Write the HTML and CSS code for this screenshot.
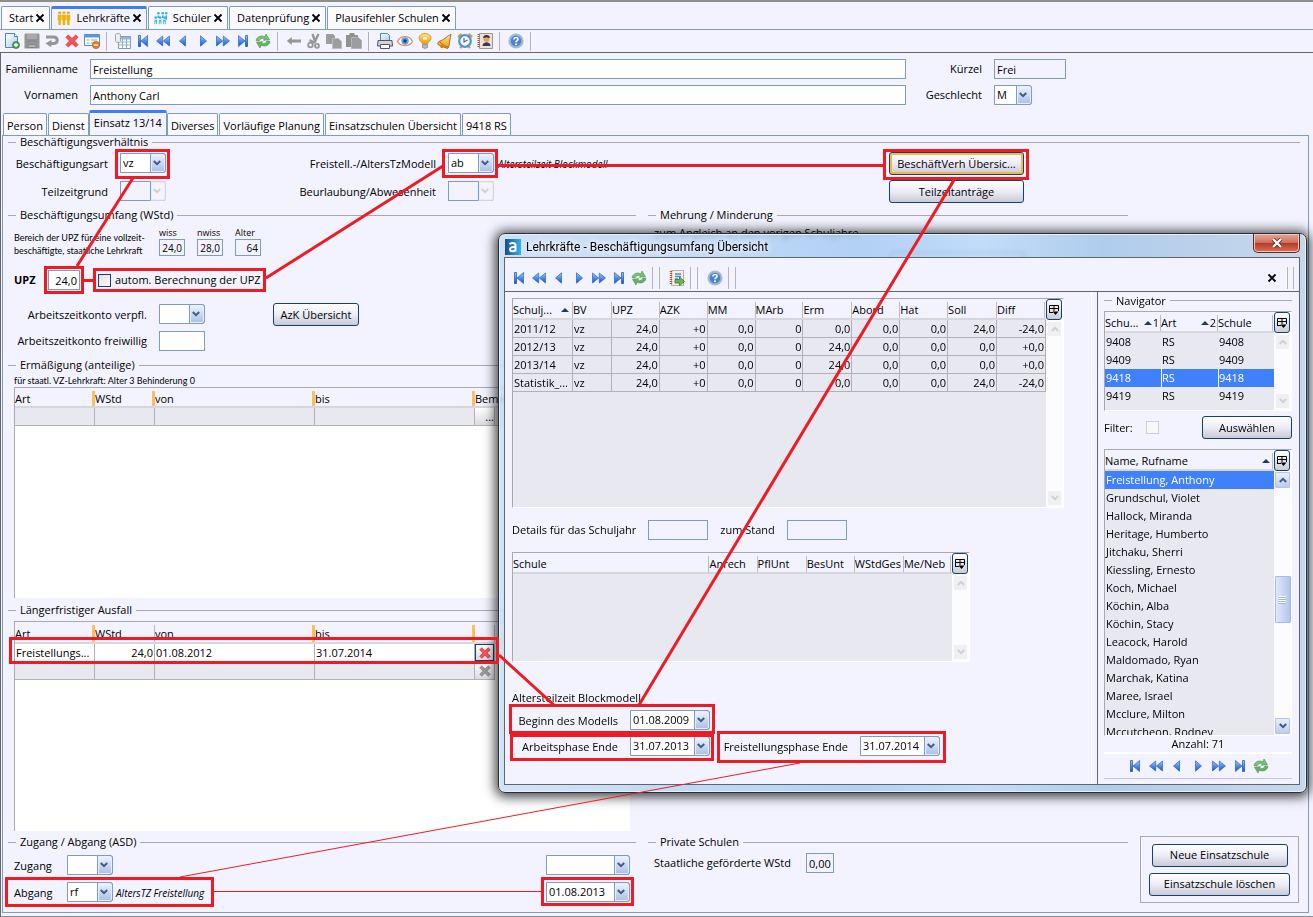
FILE: index.html
```
<!DOCTYPE html>
<html lang="de">
<head>
<meta charset="utf-8">
<title>Lehrkräfte</title>
<link rel="stylesheet" href="styles.css">
</head>
<body>
<svg class="defs" aria-hidden="true">
  <defs>
    <linearGradient id="gb" x1="0" y1="0" x2="0" y2="1"><stop offset="0" stop-color="#a9cbf7"/><stop offset=".5" stop-color="#4f8fe6"/><stop offset="1" stop-color="#1552bd"/></linearGradient>
    <linearGradient id="gg" x1="0" y1="0" x2="0" y2="1"><stop offset="0" stop-color="#fde58a"/><stop offset="1" stop-color="#e19a1c"/></linearGradient>
    <linearGradient id="gs" x1="0" y1="0" x2="1" y2="1"><stop offset="0" stop-color="#ffffff"/><stop offset="1" stop-color="#a8cdee"/></linearGradient>
    <linearGradient id="ga" x1="0" y1="0" x2="1" y2="0"><stop offset="0" stop-color="#174f86"/><stop offset="1" stop-color="#2fb4ea"/></linearGradient>
    <symbol id="first" viewBox="0 0 16 16"><path d="M3.5 2.5h2v11h-2z" fill="url(#gb)" stroke="#1a4fae" stroke-width=".7"/><path d="M12.500 2.500V13.500L6 8z" fill="url(#gb)" stroke="#2a62c4" stroke-width=".7"/></symbol>
    <symbol id="last" viewBox="0 0 16 16"><path d="M10.500 2.500h2v11h-2z" fill="url(#gb)" stroke="#1a4fae" stroke-width=".7"/><path d="M3.500 2.500V13.500L10 8z" fill="url(#gb)" stroke="#2a62c4" stroke-width=".7"/></symbol>
    <symbol id="rew" viewBox="0 0 16 16"><path d="M7.700 3v10L1.500 8zM14.500 3v10L8.300 8z" fill="url(#gb)" stroke="#2a62c4" stroke-width=".7"/></symbol>
    <symbol id="ffw" viewBox="0 0 16 16"><path d="M1.500 3v10L7.700 8zM8.300 3v10L14.500 8z" fill="url(#gb)" stroke="#2a62c4" stroke-width=".7"/></symbol>
    <symbol id="prev" viewBox="0 0 16 16"><path d="M10.500 2.800v10.400L4.500 8z" fill="url(#gb)" stroke="#2a62c4" stroke-width=".7"/></symbol>
    <symbol id="next" viewBox="0 0 16 16"><path d="M5.500 2.800v10.400L11.500 8z" fill="url(#gb)" stroke="#2a62c4" stroke-width=".7"/></symbol>
    <symbol id="refresh" viewBox="0 0 16 16"><path d="M1 7.500C2 3.500 6 2 10 3.800L11 1l3.500 5.800-6 .5 1-1.800C7 4.800 4.500 5.800 4 8z" fill="#7cc276" stroke="#3f8f45" stroke-width=".6"/><path d="M15 8.500c-1 4-5 5.500-9 3.700L5 15 1.500 9.200l6-.5-1 1.800c2.500.7 5-.3 5.500-2.500z" fill="#68b262" stroke="#3f8f45" stroke-width=".6"/></symbol>
    <symbol id="new" viewBox="0 0 16 16"><path d="M1.500.5h9l3 3v11h-12z" fill="url(#gs)" stroke="#4d86bb"/><path d="M10.500.5v3h3" fill="#fff" stroke="#4d86bb"/><circle cx="12" cy="12" r="3.500" fill="#4fa548" stroke="#2f7a33" stroke-width=".7"/><path d="M12 10v4M10 12h4" stroke="#fff" stroke-width="1.300"/></symbol>
    <symbol id="save" viewBox="0 0 16 16"><path d="M1.500.5h13l1 1v14H.500v-14z" fill="#959595"/><path d="M3 1h10v5H3z" fill="#a9a9a9"/><path d="M3 8h10M4 11.500h8v3H4z" stroke="#858585" fill="#b5b5b5"/></symbol>
    <symbol id="undo" viewBox="0 0 16 16"><path d="M2 4h7.500c5 0 5 6.500 0 6.500H6.500" fill="none" stroke="#969696" stroke-width="3"/><path d="M7.500 6.800v7.400L1.500 10.500z" fill="#969696"/></symbol>
    <symbol id="del" viewBox="0 0 16 16"><path d="M2 4.300 4.300 2 8 5.500 11.700 2 14 4.300 10.500 8 14 11.700 11.700 14 8 10.500 4.300 14 2 11.700 5.500 8z" fill="#f4555c" stroke="#d52d33" stroke-width=".8"/></symbol>
    <symbol id="delgray" viewBox="0 0 16 16"><path d="M2 4.300 4.300 2 8 5.500 11.700 2 14 4.300 10.500 8 14 11.700 11.700 14 8 10.500 4.300 14 2 11.700 5.500 8z" fill="#999" stroke="#888" stroke-width=".8"/></symbol>
    <symbol id="formdel" viewBox="0 0 16 16"><path d="M.500 1.500h15v11H.500z" fill="#fff" stroke="#5d8fc7"/><path d="M1 2h14v2.500H1z" fill="#5b97dc"/><path d="M2.500 7h3M2.500 10h3M7 7h6M7 10h4" stroke="#8aa6c4"/><circle cx="12" cy="12" r="3.600" fill="#ef7a22" stroke="#c4510f" stroke-width=".7"/><path d="M9.800 12h4.400" stroke="#fff" stroke-width="1.500"/></symbol>
    <symbol id="sheet" viewBox="0 0 16 16"><path d="M3.500 3.500h12v12h-12z" fill="#fff" stroke="#8d9aa8"/><path d="M4 4h11v2.500H4z" fill="#8fb8dd"/><path d="M4 9h11M4 12h11M7.500 6v9M11.500 6v9" stroke="#8eb3c9"/><path d="M.500 1.500c0-1.300 5-1.300 5 0v7c0 1.300-5 1.300-5 0z" fill="#eee" stroke="#a8a8a8"/></symbol>
    <symbol id="back" viewBox="0 0 16 16"><path d="M.800 8 5.800 4v2.500H15v3H5.800V12z" fill="#969696"/></symbol>
    <symbol id="cut" viewBox="0 0 16 16"><path d="M12.500 1 8.500 9.500M6.500 1l3 8.500" stroke="#969696" stroke-width="2.400" fill="none"/><path d="M3.500 7 9 10" stroke="#969696" stroke-width="2"/><circle cx="4.500" cy="12" r="2.300" fill="none" stroke="#969696" stroke-width="1.800"/><circle cx="11" cy="12.800" r="2" fill="none" stroke="#969696" stroke-width="1.800"/></symbol>
    <symbol id="copy" viewBox="0 0 16 16"><path d="M0 1h7l2 2v8H0z" fill="#9d9d9d"/><path d="M6.500 5.500h6l3 3v7h-9z" fill="#9d9d9d" stroke="#bdbdbd"/></symbol>
    <symbol id="paste" viewBox="0 0 16 16"><path d="M0 2h3l1-2h4l1 2h3v12H0z" fill="#919191"/><path d="M5.500 4.500h7l3 3v8h-10z" fill="#9d9d9d" stroke="#b3b3b3"/></symbol>
    <symbol id="print" viewBox="0 0 16 16"><path d="M3.500 7.500V.500h7l2 2v5" fill="url(#gs)" stroke="#4b87c0"/><path d="M1 7.500h14l.5 5.500H.500z" fill="#d5d5d5" stroke="#555"/><path d="M3.500 11.500h9v4h-9z" fill="#fff" stroke="#555"/></symbol>
    <symbol id="eye" viewBox="0 0 16 16"><path d="M.500 8.500C3.500 2 12.500 2 15.500 8.500 12 14 4 14 .500 8.500z" fill="#fff" stroke="#d9936a" stroke-width="1.300"/><circle cx="8" cy="8" r="3.700" fill="#5fa2dc"/><circle cx="8" cy="8" r="1.700" fill="#183d72"/></symbol>
    <symbol id="bulb" viewBox="0 0 16 16"><path d="M5.500 11C5 9 2 8 2 5c0-6 12-6 12 0 0 3-3 4-3.500 6z" fill="url(#gg)" stroke="#e0a02a"/><path d="M6 5.500h4" stroke="#fff8c8" stroke-width="2"/><path d="M5.500 11.500h5v3l-2.500 1-2.500-1z" fill="#b8b8b8" stroke="#777" stroke-width=".6"/></symbol>
    <symbol id="bell" viewBox="0 0 16 16"><path d="M14 1.500C10 2.500 9 6 2 8.500c-1.500 1-1.500 2.500-.5 3.500l9 3.500c2-.5 1.500-6 3.500-14z" fill="url(#gg)" stroke="#b2690a"/><path d="M3 9c1 1.500 5 4.500 8 5" fill="none" stroke="#b2690a"/><circle cx="5" cy="13.500" r="1.800" fill="#d38510"/></symbol>
    <symbol id="clock" viewBox="0 0 16 16"><path d="m3 15 2-2M13 15l-2-2M1 4l3.500-3M15 4l-3.500-3" stroke="#dfa12c" stroke-width="2.400"/><circle cx="8" cy="8" r="5.800" fill="#fff" stroke="#4a94dc" stroke-width="2.200"/><path d="M7 5v4l3.500-2" fill="none" stroke="#3c679b" stroke-width="1.200"/></symbol>
    <symbol id="book" viewBox="0 0 16 16"><path d="M2.500.5h13v15h-13z" fill="#e9e3dc" stroke="#a39689"/><path d="M1.500 1v14" stroke="#b5523a" stroke-width="2" stroke-dasharray="1 1"/><circle cx="9.500" cy="6" r="3" fill="#e1a56d"/><path d="M6 5c0-4 7-4 7 0l-3.500-.8z" fill="#352a26"/><path d="M5.500 13c0-5 8-5 8 0z" fill="#3c3c44"/></symbol>
    <symbol id="help" viewBox="0 0 16 16"><circle cx="8" cy="8" r="7" fill="#91b8e8" stroke="#b0b9c6" stroke-width="1.200"/><circle cx="8" cy="8" r="5.300" fill="#4c83cb"/><path d="M6 6.500c0-3 4.500-2.500 4 0-.2 1-2 1.300-2 2.700" fill="none" stroke="#fff" stroke-width="1.600"/><circle cx="8" cy="11.200" r="1" fill="#fff"/></symbol>
    <symbol id="export" viewBox="0 0 16 16"><path d="M2.500.5h12v15h-12z" fill="#f4eee6" stroke="#bcae9c"/><path d="M2 1v14" stroke="#b5523a" stroke-width="2.500" stroke-dasharray="1 1"/><path d="M6 4h6M6 6.500h6M6 9h3" stroke="#4b8ad4" stroke-width="1.300"/><path d="M6 9.500h4.500V7l5 4.500-5 4v-2.500H6z" fill="#6fb356" stroke="#2e7b2c" stroke-width=".8"/></symbol>
    <symbol id="close" viewBox="0 0 10 10"><path d="m1.500 1.500 7 7m0-7-7 7" stroke="#000" stroke-width="1.800"/></symbol>
    <symbol id="down" viewBox="0 0 8 6"><path d="m.8 1 3.200 3.200L7.200 1" fill="none" stroke="currentColor" stroke-width="2"/></symbol>
    <symbol id="up" viewBox="0 0 8 6"><path d="M.800 5 4 1.800 7.200 5" fill="none" stroke="currentColor" stroke-width="2"/></symbol>
    <symbol id="sort" viewBox="0 0 8 4"><path d="M0 4 4 0l4 4z" fill="#1f3a5c"/></symbol>
    <symbol id="cols" viewBox="0 0 12 12"><path d="M1.500 9V1.500h9V7M1 4.500h10M6 1.500V7M1 8.500h4" fill="none" stroke="#000"/><path d="M4.500 7.500h6L7.500 11z" fill="#000"/></symbol>
    <symbol id="people" viewBox="0 0 16 16"><circle cx="3" cy="2.200" r="1.800"/><circle cx="8" cy="2.200" r="1.800"/><circle cx="13" cy="2.200" r="1.800"/><path d="M.800 4.500h4.400v6H4.400V16H1.600v-5.500H.800zM5.800 4.500h4.400v6h-.8V16H6.600v-5.500h-.8zM10.800 4.500h4.400v6h-.8V16h-2.800v-5.500h-.8z"/></symbol>
    <symbol id="pupils" viewBox="0 0 16 16"><circle cx="5" cy="2.500" r="1.500"/><circle cx="10" cy="2.500" r="1.500"/><circle cx="14" cy="2.500" r="1.500"/><path d="M4 5h2v3H4zM9 5h2v3H9zM13 5h2v5h-2z"/><circle cx="2" cy="7.500" r="1.500"/><circle cx="7" cy="7.500" r="1.500"/><circle cx="12" cy="7.500" r="1.500"/><path d="M.500 10h3v5h-1v-3h-1v3h-1zM5.500 10h3v5h-1v-3h-1v3h-1zM10.500 10h3v5h-1v-3h-1v3h-1z"/></symbol>
  </defs>
</svg>

<nav class="tabs">
  <button class="tab">Start<svg class="x"><use href="#close"/></svg></button>
  <button class="tab on"><svg class="i gold"><use href="#people"/></svg>Lehrkräfte<svg class="x"><use href="#close"/></svg></button>
  <button class="tab"><svg class="i cyan"><use href="#pupils"/></svg>Schüler<svg class="x"><use href="#close"/></svg></button>
  <button class="tab">Datenprüfung<svg class="x"><use href="#close"/></svg></button>
  <button class="tab">Plausifehler Schulen<svg class="x"><use href="#close"/></svg></button>
</nav>

<div class="toolbar main-tools">
  <button aria-label="Neu"><svg><use href="#new"/></svg></button>
  <button aria-label="Speichern"><svg><use href="#save"/></svg></button>
  <button aria-label="Rückgängig"><svg><use href="#undo"/></svg></button>
  <button aria-label="Löschen"><svg><use href="#del"/></svg></button>
  <button aria-label="Formular"><svg><use href="#formdel"/></svg></button>
  <i class="sep"></i>
  <button aria-label="Liste"><svg><use href="#sheet"/></svg></button>
  <button aria-label="Erster"><svg><use href="#first"/></svg></button>
  <button aria-label="Zurückspulen"><svg><use href="#rew"/></svg></button>
  <button aria-label="Voriger"><svg><use href="#prev"/></svg></button>
  <button aria-label="Nächster"><svg><use href="#next"/></svg></button>
  <button aria-label="Vorspulen"><svg><use href="#ffw"/></svg></button>
  <button aria-label="Letzter"><svg><use href="#last"/></svg></button>
  <button aria-label="Aktualisieren"><svg><use href="#refresh"/></svg></button>
  <i class="sep"></i>
  <button aria-label="Zurück"><svg><use href="#back"/></svg></button>
  <button aria-label="Ausschneiden"><svg><use href="#cut"/></svg></button>
  <button aria-label="Kopieren"><svg><use href="#copy"/></svg></button>
  <button aria-label="Einfügen"><svg><use href="#paste"/></svg></button>
  <i class="sep"></i>
  <button aria-label="Drucken"><svg><use href="#print"/></svg></button>
  <button aria-label="Ansicht"><svg><use href="#eye"/></svg></button>
  <button aria-label="Hinweis"><svg><use href="#bulb"/></svg></button>
  <button aria-label="Glocke"><svg><use href="#bell"/></svg></button>
  <button aria-label="Wecker"><svg><use href="#clock"/></svg></button>
  <button aria-label="Adressbuch"><svg><use href="#book"/></svg></button>
  <i class="sep"></i>
  <button aria-label="Hilfe"><svg><use href="#help"/></svg></button>
  <i class="sep"></i>
</div>

<main class="page">
  <div class="head">
    <label for="fn">Familienname</label><input id="fn" value="Freistellung">
    <label for="kz">Kürzel</label><input id="kz" class="ro" value="Frei" readonly>
    <label for="vn">Vornamen</label><input id="vn" value="Anthony Carl">
    <label for="ge">Geschlecht</label><span class="combo w38"><select id="ge"><option>M</option></select><i><svg><use href="#down"/></svg></i></span>
  </div>

  <nav class="subtabs">
    <button class="tab">Person</button><button class="tab">Dienst</button><button class="tab on">Einsatz 13/14</button><button class="tab">Diverses</button><button class="tab">Vorläufige Planung</button><button class="tab">Einsatzschulen Übersicht</button><button class="tab">9418 RS</button>
  </nav>

  <section class="panel">
    <fieldset>
      <legend>Beschäftigungsverhältnis</legend>
      <div class="verh">
        <label for="ba">Beschäftigungsart</label>
        <span class="combo w46"><select id="ba"><option>vz</option></select><i><svg><use href="#down"/></svg></i></span>
        <label for="fm">Freistell.-/AltersTzModell</label>
        <div class="with-note"><span class="combo w46"><select id="fm"><option>ab</option></select><i><svg><use href="#down"/></svg></i></span><em>Altersteilzeit Blockmodell</em></div>
        <button class="btn hot">BeschäftVerh Übersic...</button>
        <label for="tg">Teilzeitgrund</label>
        <span class="combo w46 off"><select id="tg" disabled></select><i><svg><use href="#down"/></svg></i></span>
        <label for="bu">Beurlaubung/Abwesenheit</label>
        <span class="combo w46 off"><select id="bu" disabled></select><i><svg><use href="#down"/></svg></i></span>
        <button class="btn">Teilzeitanträge</button>
      </div>
    </fieldset>

    <div class="cols">
      <div class="left">
        <fieldset>
          <legend>Beschäftigungsumfang (WStd)</legend>
          <div class="range">
            <p class="tiny">Bereich der UPZ für eine vollzeit-<br>beschäftigte, staatliche Lehrkraft</p>
            <label>wiss<input class="ro num" value="24,0" readonly></label>
            <label>nwiss<input class="ro num" value="28,0" readonly></label>
            <label>Alter<input class="ro num" value="64" readonly></label>
          </div>
          <div class="upz">
            <label for="upz"><b>UPZ</b></label><input id="upz" class="num" value="24,0">
            <label class="check"><input type="checkbox">autom. Berechnung der UPZ</label>
          </div>
          <div class="azk">
            <label for="av">Arbeitszeitkonto verpfl.</label>
            <span class="combo w46"><select id="av"></select><i><svg><use href="#down"/></svg></i></span>
            <button class="btn">AzK Übersicht</button>
            <label for="af">Arbeitszeitkonto freiwillig</label><input id="af">
          </div>
        </fieldset>

        <fieldset class="erm">
          <legend>Ermäßigung (anteilige)</legend>
          <p class="tiny">für staatl. VZ-Lehrkraft: Alter 3 Behinderung 0</p>
          <div class="grid-box">
            <table class="grid">
              <colgroup><col class="c80"><col class="c60"><col class="c160"><col class="c160"><col class="c20"><col></colgroup>
              <thead><tr><th>Art</th><th class="o">WStd</th><th class="o">von</th><th class="o">bis</th><th class="o" colspan="2">Bemerkung</th></tr></thead>
              <tbody><tr class="dim"><td></td><td></td><td></td><td></td><td class="cellbtn"><button class="dots">...</button></td><td></td></tr></tbody>
            </table>
          </div>
        </fieldset>

        <fieldset class="ausfall">
          <legend>Längerfristiger Ausfall</legend>
          <div class="grid-box">
            <table class="grid">
              <colgroup><col class="c80"><col class="c60"><col class="c160"><col class="c160"><col class="c20"><col></colgroup>
              <thead><tr><th>Art</th><th class="o">WStd</th><th class="g">von</th><th class="o">bis</th><th class="o"></th><th class="g"></th></tr></thead>
              <tbody>
                <tr><td>Freistellungs...</td><td class="r">24,0</td><td>01.08.2012</td><td>31.07.2014</td><td class="cellbtn"><button class="framed" aria-label="Zeile löschen"><svg><use href="#del"/></svg></button></td><td class="none"></td></tr>
                <tr class="dim"><td></td><td></td><td></td><td></td><td class="cellbtn"><button aria-label="Zeile löschen"><svg><use href="#delgray"/></svg></button></td><td class="none"></td></tr>
              </tbody>
            </table>
          </div>
        </fieldset>
      </div>
      <fieldset class="right">
        <legend>Mehrung / Minderung</legend>
        <div class="mehr"><span>zum Angleich an den vorigen Schuljahre.</span><button class="btn" aria-label="Minderung"></button></div>
      </fieldset>
    </div>

    <div class="foot">
      <fieldset class="left">
        <legend>Zugang / Abgang (ASD)</legend>
        <div class="zug">
          <label for="zu">Zugang</label><span class="combo w46"><select id="zu"></select><i><svg><use href="#down"/></svg></i></span><em></em>
          <span class="combo w84"><select aria-label="Zugang Datum"></select><i><svg><use href="#down"/></svg></i></span>
          <label for="ag">Abgang</label><span class="combo w46"><select id="ag"><option>rf</option></select><i><svg><use href="#down"/></svg></i></span><em>AltersTZ Freistellung</em>
          <span class="combo w84"><select aria-label="Abgang Datum"><option>01.08.2013</option></select><i><svg><use href="#down"/></svg></i></span>
        </div>
      </fieldset>
      <fieldset class="right">
        <legend>Private Schulen</legend>
        <div class="privat"><label for="sw">Staatliche geförderte WStd</label><input id="sw" class="ro" value="0,00" readonly></div>
      </fieldset>
      <div class="actions"><button class="btn">Neue Einsatzschule</button><button class="btn wide">Einsatzschule löschen</button></div>
    </div>
  </section>
</main>

<section class="dialog" role="dialog" aria-labelledby="dt">
  <header class="title">
    <svg class="app" viewBox="0 0 16 16"><rect width="16" height="16" fill="url(#ga)"/><path d="M4.500 5.200c1-1.700 6-2 6 1.300v6M10.500 8C7 7.700 5 8.500 5 10.300c0 2.700 4.500 2.700 5.500 0" fill="none" stroke="#fff" stroke-width="2"/></svg>
    <h1 id="dt">Lehrkräfte - Beschäftigungsumfang Übersicht</h1>
    <button class="winclose" aria-label="Schließen"><svg viewBox="0 0 12 10"><path d="m2 1 8 8m0-8L2 9" stroke="#6b2a22" stroke-width="4"/><path d="m2 1 8 8m0-8L2 9" stroke="#fff" stroke-width="2.400"/></svg></button>
  </header>
  <div class="client">
    <div class="toolbar dlg-tools">
      <button aria-label="Erster"><svg><use href="#first"/></svg></button>
      <button aria-label="Zurückspulen"><svg><use href="#rew"/></svg></button>
      <button aria-label="Voriger"><svg><use href="#prev"/></svg></button>
      <button aria-label="Nächster"><svg><use href="#next"/></svg></button>
      <button aria-label="Vorspulen"><svg><use href="#ffw"/></svg></button>
      <button aria-label="Letzter"><svg><use href="#last"/></svg></button>
      <button aria-label="Aktualisieren"><svg><use href="#refresh"/></svg></button>
      <i class="sep"></i><i class="sep thin"></i>
      <button aria-label="Export"><svg><use href="#export"/></svg></button>
      <i class="sep"></i><i class="sep thin"></i>
      <button aria-label="Hilfe"><svg><use href="#help"/></svg></button>
      <i class="sep"></i><i class="sep thin"></i>
      <button class="shut" aria-label="Ansicht schließen"><svg class="x"><use href="#close"/></svg></button>
      <i class="sep thin"></i><i class="sep thin"></i>
    </div>
    <div class="split">
      <div class="overview">
        <div class="scrollbox big">
          <table class="grid lines">
            <colgroup><col class="c60"><col class="c39"><col class="c48"><col class="c48"><col class="c48"><col class="c48"><col class="c49"><col class="c48"><col class="c48"><col class="c49"><col class="c49"></colgroup>
            <thead><tr><th>Schulj...<svg class="sort"><use href="#sort"/></svg></th><th class="g">BV</th><th class="g">UPZ</th><th class="g">AZK</th><th class="g">MM</th><th class="g">MArb</th><th class="g">Erm</th><th class="g">Abord</th><th class="g">Hat</th><th class="g">Soll</th><th class="g end">Diff</th></tr></thead>
            <tbody>
              <tr><td>2011/12</td><td>vz</td><td>24,0</td><td>+0</td><td>0,0</td><td>0</td><td>0,0</td><td>0,0</td><td>0,0</td><td>24,0</td><td>-24,0</td></tr>
              <tr><td>2012/13</td><td>vz</td><td>24,0</td><td>+0</td><td>0,0</td><td>0</td><td>24,0</td><td>0,0</td><td>0,0</td><td>0,0</td><td>+0,0</td></tr>
              <tr><td>2013/14</td><td>vz</td><td>24,0</td><td>+0</td><td>0,0</td><td>0</td><td>24,0</td><td>0,0</td><td>0,0</td><td>0,0</td><td>+0,0</td></tr>
              <tr><td>Statistik_...</td><td>vz</td><td>24,0</td><td>+0</td><td>0,0</td><td>0</td><td>0,0</td><td>0,0</td><td>0,0</td><td>24,0</td><td>-24,0</td></tr>
            </tbody>
          </table>
          <div class="bar"><button class="cfg" aria-label="Spalten"><svg><use href="#cols"/></svg></button><div class="track off"><i><svg><use href="#up"/></svg></i><i><svg><use href="#down"/></svg></i></div></div>
        </div>
        <div class="details">
          <label for="ds">Details für das Schuljahr</label><input id="ds" class="ro" readonly>
          <label for="st">zum Stand</label><input id="st" class="ro" readonly>
        </div>
        <div class="scrollbox small">
          <table class="grid lines">
            <colgroup><col class="c196"><col class="c48"><col class="c49"><col class="c48"><col class="c49"><col class="c48"></colgroup>
            <thead><tr><th>Schule</th><th class="g">Anrech</th><th class="g">PflUnt</th><th class="g">BesUnt</th><th class="g">WStdGes</th><th class="g end">Me/Neb</th></tr></thead>
          </table>
          <div class="bar"><button class="cfg" aria-label="Spalten"><svg><use href="#cols"/></svg></button><div class="track off"><i><svg><use href="#up"/></svg></i><i><svg><use href="#down"/></svg></i></div></div>
        </div>
        <h2>Altersteilzeit Blockmodell</h2>
        <div class="phases">
          <label for="bm">Beginn des Modells</label><span class="combo w80"><select id="bm"><option>01.08.2009</option></select><i><svg><use href="#down"/></svg></i></span>
          <label class="row2" for="ae">Arbeitsphase Ende</label><span class="combo w80"><select id="ae"><option>31.07.2013</option></select><i><svg><use href="#down"/></svg></i></span>
          <label for="fe">Freistellungsphase Ende</label><span class="combo w80"><select id="fe"><option>31.07.2014</option></select><i><svg><use href="#down"/></svg></i></span>
        </div>
      </div>
      <aside class="navigator">
        <fieldset>
          <legend>Navigator</legend>
          <div class="scrollbox schools">
            <table class="grid">
              <colgroup><col class="c56"><col class="c57"><col></colgroup>
              <thead><tr><th>Schu...<span class="ord"><svg class="sort"><use href="#sort"/></svg>1</span></th><th class="g">Art<span class="ord"><svg class="sort"><use href="#sort"/></svg>2</span></th><th class="g end">Schule</th></tr></thead>
              <tbody>
                <tr><td>9408</td><td>RS</td><td>9408</td></tr>
                <tr><td>9409</td><td>RS</td><td>9409</td></tr>
                <tr class="sel"><td>9418</td><td>RS</td><td>9418</td></tr>
                <tr><td>9419</td><td>RS</td><td>9419</td></tr>
              </tbody>
            </table>
            <div class="bar"><button class="cfg" aria-label="Spalten"><svg><use href="#cols"/></svg></button><div class="track off"><i><svg><use href="#up"/></svg></i><i><svg><use href="#down"/></svg></i></div></div>
          </div>
          <div class="filter"><label for="fi">Filter:</label><input id="fi" type="checkbox" disabled><button class="btn">Auswählen</button></div>
          <div class="scrollbox names">
            <table class="grid">
              <thead><tr><th class="end">Name, Rufname<svg class="sort"><use href="#sort"/></svg></th></tr></thead>
              <tbody>
                <tr class="sel"><td>Freistellung, Anthony</td></tr>
                <tr><td>Grundschul, Violet</td></tr>
                <tr><td>Hallock, Miranda</td></tr>
                <tr><td>Heritage, Humberto</td></tr>
                <tr><td>Jitchaku, Sherri</td></tr>
                <tr><td>Kiessling, Ernesto</td></tr>
                <tr><td>Koch, Michael</td></tr>
                <tr><td>Köchin, Alba</td></tr>
                <tr><td>Köchin, Stacy</td></tr>
                <tr><td>Leacock, Harold</td></tr>
                <tr><td>Maldomado, Ryan</td></tr>
                <tr><td>Marchak, Katina</td></tr>
                <tr><td>Maree, Israel</td></tr>
                <tr><td>Mcclure, Milton</td></tr>
                <tr><td>Mccutcheon, Rodney</td></tr>
              </tbody>
            </table>
            <div class="bar"><button class="cfg" aria-label="Spalten"><svg><use href="#cols"/></svg></button><div class="track"><i><svg><use href="#up"/></svg></i><b class="thumb"></b><i><svg><use href="#down"/></svg></i></div></div>
          </div>
          <p class="count">Anzahl: 71</p>
          <div class="toolbar nav-tools">
            <button aria-label="Erster"><svg><use href="#first"/></svg></button>
            <button aria-label="Zurückspulen"><svg><use href="#rew"/></svg></button>
            <button aria-label="Voriger"><svg><use href="#prev"/></svg></button>
            <button aria-label="Nächster"><svg><use href="#next"/></svg></button>
            <button aria-label="Vorspulen"><svg><use href="#ffw"/></svg></button>
            <button aria-label="Letzter"><svg><use href="#last"/></svg></button>
            <button aria-label="Aktualisieren"><svg><use href="#refresh"/></svg></button>
          </div>
        </fieldset>
      </aside>
    </div>
  </div>
</section>

<svg class="marks" aria-hidden="true">
  <g fill="none" stroke="#ed1c24" stroke-width="3">
    <path d="M116.500 150.500h52v27h-52zM45.500 267.500h37v25h-37zM94.500 269.500h170v21h-170zM443.500 150.500h53v26h-53zM884.500 150.500h143v28h-143z"/>
    <path d="M10.500 638.500h487v24h-487zM510.500 705.500h203v27h-203zM511.500 735.500h201v24h-201zM718.500 732.500h226v29h-226zM6.500 878.500h206v27h-206zM542.500 878.500h90v26h-90z"/>
    <path d="M133 178 77 266M84 280.500h9M266 278l177-112M498 165.500h386M954 180 639 705M499 655l55 50"/>
    <path stroke-width="1" d="M800 763 180 877M214 891.500h328"/>
  </g>
</svg>
</body>
</html>
```
FILE: styles.css
```
:root {
  --bg: #f3f3ff;
  --line: #7f9bbd;
  --gray: #a9a9ae;
  --dim: #e8e8f1;
  --navy: #17406f;
}
* { box-sizing: border-box; }
body {
  margin: 0;
  min-height: 100vh;
  display: flex;
  flex-direction: column;
  position: relative;
  background: var(--bg);
  border-top: 2px solid #8e8e8c;
  font: 11px/14px "Open Sans", "Noto Sans", sans-serif;
  color: #000;
  overflow-x: hidden;
}
button, input, select { font: inherit; color: inherit; margin: 0; }
button { padding: 0; border: 0; background: none; }
p, h1, h2 { margin: 0; font-weight: normal; font-size: inherit; }
svg { display: block; flex: none; }
.defs { position: absolute; width: 0; height: 0; }

/* tabs */
.tabs, .subtabs { display: flex; align-items: flex-end; gap: 1px; border-bottom: 1px solid var(--line); }
.tabs { padding: 4px 0 0 1px; height: 28px; }
.tab {
  display: flex;
  align-items: center;
  gap: 2px;
  height: 23px;
  padding: 0 4px 0 7px;
  border: 1px solid var(--line);
  border-bottom: 0;
  border-radius: 2px 2px 0 0;
  background: #fbfbff;
  white-space: nowrap;
}
.tab .x { width: 10px; height: 10px; }
.tab .i { width: 16px; height: 14px; margin-right: 2px; }
.tabs .tab:has(.i) { padding-left: 4px; }
.gold { fill: #f3b200; }
.cyan { fill: #35b4dd; }
.tab.on { border-top: 3px solid #3f7df2; background: var(--bg); padding-bottom: 3px; }

/* toolbars */
.toolbar { display: flex; align-items: center; }
.toolbar button { width: 20px; height: 20px; display: grid; place-items: center; }
.toolbar svg { width: 16px; height: 16px; }
.sep { flex: none; width: 1px; height: 19px; margin: 0 6px 0 4px; background: #b4b4bc; }
.main-tools { height: 23px; padding-left: 2px; border-bottom: 1px solid #666; }

/* fields */
input:not([type=checkbox]) {
  height: 20px;
  min-width: 0;
  width: 100%;
  padding: 0 2px;
  border: 1px solid var(--line);
  border-radius: 0;
  background: #fff;
}
input.ro:not([type=checkbox]) { background: var(--bg); }
input.num { text-align: right; }
input[type=checkbox] {
  appearance: none;
  flex: none;
  width: 13px;
  height: 13px;
  border: 1px solid var(--navy);
  background: linear-gradient(135deg, #dcdce4, #fff);
}
input[type=checkbox]:disabled { border-color: #cfcfd8; background: #f8f8fc; }
.combo { display: grid; grid-template-columns: 1fr 16px; height: 21px; }
.combo select {
  appearance: none;
  grid-area: 1 / 1 / 2 / 3;
  width: 100%;
  height: 20px;
  padding: 0 16px 0 2px;
  border: 1px solid var(--line);
  border-radius: 0 3px 3px 0;
  background: #fff;
  opacity: 1;
}
.combo i {
  grid-area: 1 / 2;
  display: grid;
  place-items: center;
  height: 20px;
  padding-right: 2px;
  border: 1px solid var(--line);
  border-radius: 0 3px 3px 0;
  box-shadow: inset 0 0 0 1px #e6eeff;
  background: linear-gradient(#f0f4ff, #a9bee6);
  color: #3f5c86;
  pointer-events: none;
}
.combo svg, .track svg { width: 8px; height: 6px; }
.combo.off select { background: var(--bg); border-right-color: transparent; }
.combo.off i { border-color: #d5d5dd; border-left-color: var(--line); background: #f4f4fa; color: #d0d0d8; }
.w38 { width: 38px; }
.w46 { width: 46px; }
.w80 { width: 80px; }
.w84 { width: 84px; }
.btn {
  height: 23px;
  padding: 0 6px;
  border: 1px solid var(--navy);
  border-radius: 3px;
  background: linear-gradient(#fff, #ececf6 50%, #c9c9d8);
  white-space: nowrap;
}
.btn.hot { box-shadow: inset 0 0 0 2px #f5b648; }
em { font-size: 10px; white-space: nowrap; }
.tiny { font: 9px/13px "Liberation Sans Narrow", "Lato", sans-serif; white-space: nowrap; }

/* header form */
.page { flex: 1; display: flex; flex-direction: column; padding: 6px 4px 3px 1px; border-left: 1px solid #666; border-bottom: 1px solid #8c8ca0; }
.head {
  display: grid;
  grid-template-columns: 76px minmax(0, 1fr) 64px 72px;
  gap: 6px 12px;
  padding-right: 243px;
  align-items: center;
}
.head label, .verh label, .azk label, .phases label { text-align: right; white-space: nowrap; }
.head .combo { height: 20px; }
.subtabs { padding: 5px 0 0 1px; border: 0; }
.subtabs .tab { height: 22px; padding: 3px 3px 0; }
.subtabs .tab.on { height: 25px; padding: 0 4px 3px; margin: 0 -1px; }

/* group boxes */
fieldset { margin: 0; padding: 0; border: 0; border-top: 1px solid var(--gray); min-width: 0; }
legend { margin-left: 8px; padding: 0 4px; line-height: 12px; }
.panel { flex: 1; display: flex; flex-direction: column; border: 1px solid var(--line); padding: 0 8px 9px 5px; }
.verh {
  display: grid;
  grid-template-columns: 100px 46px 258px minmax(0, 429px) 135px;
  gap: 5px 12px;
  padding-top: 4px;
  align-items: center;
}
.with-note { display: flex; align-items: center; gap: 4px; }
.cols, .foot { display: flex; gap: 12px; }
.cols { margin-top: 6px; flex: 1; }
.left { flex: 0 0 628px; min-width: 0; }
.cols .left { display: flex; flex-direction: column; }
.right { flex: 0 1 480px; }
.range { display: flex; gap: 12px; padding: 6px 0 0 6px; }
.range .tiny { width: 133px; padding-top: 4px; }
.range label { width: 26px; font-size: 9px; line-height: 12px; white-space: nowrap; }
.range input:not([type=checkbox]) { display: block; height: 17px; font-size: 10px; }
.upz { display: flex; align-items: center; padding: 13px 0 0 6px; }
.upz label:first-child { width: 34px; }
.upz > input:not([type=checkbox]) { width: 32px; }
.check { display: flex; align-items: center; gap: 4px; margin-left: 18px; }
.azk { display: grid; grid-template-columns: 139px 46px 142px; grid-auto-rows: 21px; gap: 5px 12px; padding: 14px 0 0 0; align-items: center; }
.azk .btn { width: 86px; justify-self: end; }
.erm, .ausfall { display: flex; flex-direction: column; }
.erm { margin-top: 8px; flex: 1; }
.ausfall { margin-top: 6px; }
.erm .tiny { padding: 3px 0 0 6px; }
.grid-box { flex: 1; margin: 0 6px; background: #fff; border: 1px solid var(--gray); border-width: 1px 0 0 1px; }
.ausfall .grid-box { min-height: 210px; margin-top: 5px; margin-bottom: 5px; }

/* tables */
.grid { width: 100%; table-layout: fixed; border-collapse: separate; border-spacing: 0; }
.grid th {
  position: relative;
  height: 20px;
  padding: 3px 0 0 0;
  font-weight: normal;
  text-align: left;
  line-height: 14px;
  background: var(--bg);
  border-bottom: 2px solid #d6d6de;
  white-space: nowrap;
}
.ausfall .grid th { height: 22px; }
.grid th.g::before, .grid th.o::before, .grid th.end::after { content: ""; position: absolute; left: -1px; top: 3px; bottom: 0; width: 1px; background: #bcbcc2; }
.grid th.o::before { left: -3px; width: 3px; background: #fbc05c; }
.grid th.end::after { left: auto; right: 1px; }
.grid td {
  height: 18px;
  padding: 0 1px;
  line-height: 16px;
  border: 1px solid #b2b2b6;
  border-width: 0 1px 1px 0;
  white-space: nowrap;
  overflow: hidden;
}
.grid td.r { text-align: right; }
.dim td { background: var(--dim); }
.grid td.none { border: 0; background: #fff; }
.grid td.cellbtn { padding: 0; }
.cellbtn button { display: grid; place-items: center; width: 19px; height: 17px; background: linear-gradient(#fff, #dadae2); }
.cellbtn button.framed { border: 1px solid var(--navy); }
.cellbtn button.dots { justify-items: end; }
.cellbtn svg { width: 14px; height: 14px; }
.c20 { width: 20px; } .c39 { width: 39px; } .c48 { width: 48px; } .c49 { width: 49px; }
.c56 { width: 56px; } .c57 { width: 57px; } .c60 { width: 60px; } .c80 { width: 80px; }
.c160 { width: 160px; } .c196 { width: 196px; }
.sort { position: absolute; right: 4px; top: 9px; width: 8px; height: 4px; }
.ord { position: absolute; right: 2px; padding-left: 9px; }
.ord .sort { left: 0; top: 5px; }

/* under the window */
.mehr { display: grid; grid-template-columns: 236px 135px; grid-template-rows: 14px 23px; padding: 5px 0 0 6px; gap: 12px 0; }
.mehr .btn { grid-area: 2 / 2; }

/* bottom row */
.zug { display: grid; grid-template-columns: 41px 46px 1fr 84px; column-gap: 12px; row-gap: 6px; padding: 7px 6px 0; align-items: center; }
.zug em { margin-left: -9px; }
.privat { display: flex; align-items: center; gap: 12px; padding: 5px 6px 0; }
.privat label { width: 140px; white-space: nowrap; }
.privat input:not([type=checkbox]) { width: 28px; }
.actions { flex: none; display: flex; flex-direction: column; align-items: center; justify-content: center; gap: 6px; width: 159px; border: 1px solid var(--gray); }
.actions .btn { width: 136px; }
.actions .btn.wide { width: 141px; }

/* window */
.dialog {
  position: absolute;
  left: 498px;
  right: 6px;
  top: 231px;
  display: flex;
  flex-direction: column;
  height: 560px;
  padding: 0 6px 7px 5px;
  border: 1px solid #26303c;
  border-radius: 7px;
  background: linear-gradient(90deg, #c7dcf2cc, #a2c8f3cc 45%, #b5d5f8cc 60%, #9fc2e8cc 75%, #bcd0e4cc);
  backdrop-filter: blur(2px);
  box-shadow: inset 0 0 0 1px #e4f0fc, 0 1px 12px 3px #000b;
}
.title { display: flex; align-items: flex-start; height: 23px; }
.title h1 { flex: 1; padding: 6px 0 0 5px; font: 12px/14px Roboto, "Open Sans", sans-serif; text-shadow: 0 0 6px #fff, 0 0 6px #fff; }
.app { width: 16px; height: 16px; margin: 5px 0 0 1px; }
.winclose { display: grid; place-items: center; width: 47px; height: 19px; border: 1px solid #5d2a26; border-top: 0; border-radius: 0 0 5px 5px; background: linear-gradient(#e3a79b, #cf6f5e 48%, #b93a24 52%, #d8705a); box-shadow: inset 0 0 0 1px #f3c4ba; }
.winclose svg { width: 12px; height: 10px; }
.client { flex: 1; min-height: 0; display: flex; flex-direction: column; background: var(--bg); border: 1px solid #5d6672; }
.dlg-tools { height: 34px; padding: 7px 5px 0 4px; border-bottom: 1px solid #666; }
.dlg-tools .sep { height: 22px; margin: 0 0 0 3px; }
.dlg-tools .sep.thin { margin: 0 7px 0 6px; }
.dlg-tools .shut { margin-left: auto; }
.dlg-tools .shut ~ .sep.thin { margin: 0 0 0 5px; }
.toolbar .x { width: 10px; height: 10px; }
.split { flex: 1; min-height: 0; display: flex; gap: 5px; }
.overview { flex: 1; min-width: 0; padding: 6px 7px 0; border-right: 1px solid #fff; }
.scrollbox { display: flex; background: var(--dim); border: 1px solid var(--gray); border-right-color: #fff; border-bottom-color: #fff; }
.scrollbox .grid { flex: 1; width: auto; height: max-content; }
.scrollbox .grid th { height: 21px; }
.bar { flex: none; width: 17px; display: flex; flex-direction: column; background: #fcfcff; }
.cfg { display: grid; place-items: center; width: 16px; height: 21px; border: 1px solid var(--navy); border-radius: 3px; background: linear-gradient(#fff, #ccccd8); }
.cfg svg { width: 12px; height: 12px; }
.track { flex: 1; display: flex; flex-direction: column; justify-content: space-between; align-items: center; padding: 1px 0; }
.track i { display: grid; place-items: center; width: 15px; height: 16px; border: 1px solid #b3c3ea; border-radius: 1px; background: linear-gradient(#e9effd, #bccbee); color: #3f5c86; }
.track.off i { width: 13px; height: 14px; margin: 1px 0; border: 0; background: #f0f0f4; color: #d0d0d4; }
.thumb { width: 16px; height: 47px; margin: 88px 0 auto; border: 1px solid #a8bbe6; border-radius: 1px; background: repeating-linear-gradient(#fff 0 1px, #9fb5e2 1px 2px) center / 7px 8px no-repeat, linear-gradient(90deg, #dfe8fc, #b4c4ea); }
.big { width: 552px; height: 210px; }
.small { width: 458px; height: 110px; }
.lines tbody td:nth-child(n+3) { text-align: right; }
.details { display: flex; align-items: center; gap: 12px; padding: 12px 0; }
.details input:not([type=checkbox]) { width: 60px; }
.details label { white-space: nowrap; }
.overview h2 { padding-top: 29px; }
.phases { display: grid; grid-template-columns: 106px 80px 126px 80px; gap: 5px 12px; padding-top: 5px; align-items: center; }
.phases .row2 { grid-column: 1; }

/* navigator */
.navigator { flex: none; width: 202px; padding: 3px 7px 0 6px; border-left: 1px solid #666; }
.navigator legend { line-height: 11px; }
.schools { height: 100px; margin-top: 5px; }
.schools td, .names td { border: 0; }
.schools .sel td + td { border-left: 1px solid #fff; padding-left: 0; }
.sel td { background: #3f80fb; color: #fff; }
.filter { display: flex; align-items: center; gap: 13px; padding: 5px 0 10px; }
.filter .btn { margin-left: auto; width: 90px; }
.names { height: 287px; overflow: hidden; }
.count { text-align: center; line-height: 16px; border-bottom: 2px solid #fff; }
.nav-tools { justify-content: center; gap: 1px; padding: 2px 0; border-bottom: 1px solid #c8c8d4; }

.marks { position: absolute; left: 0; top: -2px; width: 100%; height: 100%; pointer-events: none; }
```
